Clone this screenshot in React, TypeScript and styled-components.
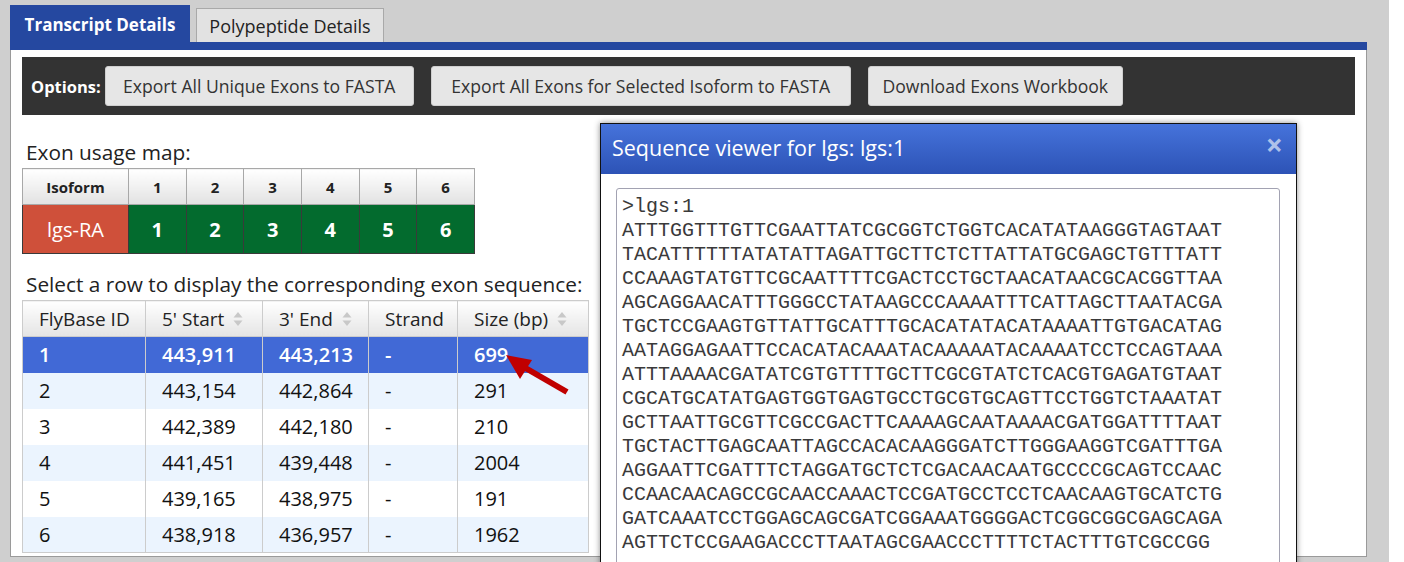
import styled, { createGlobalStyle } from "styled-components";

const GlobalStyle = createGlobalStyle`
  html, body {
    margin: 0;
    padding: 0;
    background: #ffffff;
    font-family: "Open Sans", "Liberation Sans", sans-serif;
  }
  * { box-sizing: border-box; }
`;

const Page = styled.div`
  position: relative;
  width: 1389px;
  height: 562px;
  overflow: hidden;
  background: #cfcfcf;
  padding: 5px 22px 0 10px;
`;

const TabBar = styled.div`
  display: flex;
  align-items: flex-end;
  gap: 6px;
  height: 37px;
`;

const Tab = styled.div<{ $active?: boolean }>`
  display: flex;
  align-items: center;
  justify-content: center;
  height: ${(p) => (p.$active ? "37px" : "34px")};
  width: ${(p) => (p.$active ? "180px" : "188px")};
  background: ${(p) => (p.$active ? "#2548a0" : "#e2e2e2")};
  color: ${(p) => (p.$active ? "#ffffff" : "#222222")};
  border: 1px solid ${(p) => (p.$active ? "#2548a0" : "#a9a9a9")};
  border-bottom: none;
  font-size: ${(p) => (p.$active ? "17px" : "18px")};
  font-weight: ${(p) => (p.$active ? 700 : 400)};
  white-space: nowrap;
`;

const BlueBar = styled.div`
  height: 8px;
  background: #2548a0;
`;

const Panel = styled.div`
  background: #ffffff;
  border: 1px solid #9a9a9a;
  border-top: none;
  padding: 7px 11px 4px 11px;
  height: 507px;
`;

const OptionsBar = styled.div`
  display: flex;
  align-items: center;
  gap: 17px;
  height: 58px;
  padding: 0 9px;
  background: #333333;
`;

const OptionsLabel = styled.span`
  color: #ffffff;
  font-weight: 700;
  font-size: 16.5px;
  margin-right: -13px;
`;

const Button = styled.button<{ $w: number }>`
  width: ${(p) => p.$w}px;
  height: 40px;
  background: #e6e6e6;
  border: 1px solid #cfcfcf;
  border-radius: 3px;
  color: #333333;
  font-family: inherit;
  font-size: 17.6px;
  padding: 0;
  white-space: nowrap;
`;

const LeftColumn = styled.div`
  display: flex;
  flex-direction: column;
  width: 567px;
`;

const Heading = styled.div<{ $top: number }>`
  font-size: 20.8px;
  color: #222222;
  padding-left: 4px;
  margin-top: ${(p) => p.$top}px;
  line-height: 26px;
  height: 28px;
  white-space: nowrap;
`;

const MapTable = styled.table`
  border-collapse: collapse;
  width: 453px;
  margin-top: 1px;
  th, td {
    text-align: center;
    padding: 0;
    border: 1px solid #3a3a3a;
  }
  th {
    height: 36px;
    font-size: 15px;
    font-weight: 700;
    color: #222222;
    border-color: #a8a8a8;
    background: linear-gradient(#ffffff, #e2e2e2);
  }
  td {
    height: 49px;
    font-size: 20px;
    color: #ffffff;
  }
`;

const MapCell = styled.td<{ $isoform?: boolean }>`
  background: ${(p) => (p.$isoform ? "#cf503a" : "#036b2e")};
  font-weight: ${(p) => (p.$isoform ? 500 : 700)};
`;

const DataWrap = styled.div`
  position: relative;
  margin-top: 1px;
`;

const DataTable = styled.table`
  border-collapse: collapse;
  width: 567px;
  border: 1px solid #cccccc;
  th, td {
    text-align: left;
    padding: 0 0 0 16px;
    border-left: 1px solid #cccccc;
    border-right: 1px solid #cccccc;
    white-space: nowrap;
  }
  th {
    height: 36px;
    font-size: 19px;
    font-weight: 400;
    color: #222222;
    background: linear-gradient(#ffffff, #e4e4e4);
    border-bottom: 1px solid #cccccc;
  }
  td {
    height: 36px;
    font-size: 20px;
    color: #111111;
  }
`;

const Row = styled.tr<{ $selected?: boolean; $alt?: boolean }>`
  background: ${(p) => (p.$selected ? "#4169d6" : p.$alt ? "#ebf4fe" : "#ffffff")};
  td {
    color: ${(p) => (p.$selected ? "#ffffff" : "#111111")};
    font-weight: ${(p) => (p.$selected ? 600 : 400)};
  }
`;

const HeadInner = styled.span`
  display: inline-flex;
  align-items: center;
  gap: 9px;
`;

const SortIcon = () => (
  <svg width="10" height="16" viewBox="0 0 10 16">
    <polygon points="5,1 9.5,6.5 0.5,6.5" fill="#c8c8c8" />
    <polygon points="0.5,9.5 9.5,9.5 5,15" fill="#c8c8c8" />
  </svg>
);

const Arrow = styled.svg`
  position: absolute;
  left: 448px;
  top: 40px;
  pointer-events: none;
`;

const Dialog = styled.div`
  position: absolute;
  left: 600px;
  top: 123px;
  width: 697px;
  height: 470px;
  background: #ffffff;
  border: 1px solid #111111;
  box-shadow: 0 0 6px rgba(0, 0, 0, 0.45);
  display: flex;
  flex-direction: column;
`;

const DialogHeader = styled.div`
  display: flex;
  align-items: center;
  justify-content: space-between;
  height: 50px;
  padding: 0 13px 3px 11px;
  background: linear-gradient(#4673db, #2d53b6);
  color: #ffffff;
  font-size: 21.5px;
`;

const Close = styled.span`
  color: #aec1ea;
  font-size: 30px;
  font-weight: 700;
  line-height: 1;
  margin-top: -6px;
`;

const DialogBody = styled.div`
  padding: 14px 16px 0 15px;
  flex: 1;
`;

const SeqBox = styled.div`
  border: 1px solid #a2a2b2;
  border-radius: 3px;
  height: 400px;
  padding: 6px 5px;
  font-family: "Liberation Mono", "Courier New", monospace;
  font-size: 20px;
  line-height: 24px;
  color: #3a3a3a;
  white-space: pre;
`;

const exons = [
  ["1", "443,911", "443,213", "-", "699"],
  ["2", "443,154", "442,864", "-", "291"],
  ["3", "442,389", "442,180", "-", "210"],
  ["4", "441,451", "439,448", "-", "2004"],
  ["5", "439,165", "438,975", "-", "191"],
  ["6", "438,918", "436,957", "-", "1962"],
];

const sequence = [
  ">lgs:1",
  "ATTTGGTTTGTTCGAATTATCGCGGTCTGGTCACATATAAGGGTAGTAAT",
  "TACATTTTTTATATATTAGATTGCTTCTCTTATTATGCGAGCTGTTTATT",
  "CCAAAGTATGTTCGCAATTTTCGACTCCTGCTAACATAACGCACGGTTAA",
  "AGCAGGAACATTTGGGCCTATAAGCCCAAAATTTCATTAGCTTAATACGA",
  "TGCTCCGAAGTGTTATTGCATTTGCACATATACATAAAATTGTGACATAG",
  "AATAGGAGAATTCCACATACAAATACAAAAATACAAAATCCTCCAGTAAA",
  "ATTTAAAACGATATCGTGTTTTGCTTCGCGTATCTCACGTGAGATGTAAT",
  "CGCATGCATATGAGTGGTGAGTGCCTGCGTGCAGTTCCTGGTCTAAATAT",
  "GCTTAATTGCGTTCGCCGACTTCAAAAGCAATAAAACGATGGATTTTAAT",
  "TGCTACTTGAGCAATTAGCCACACAAGGGATCTTGGGAAGGTCGATTTGA",
  "AGGAATTCGATTTCTAGGATGCTCTCGACAACAATGCCCCGCAGTCCAAC",
  "CCAACAACAGCCGCAACCAAACTCCGATGCCTCCTCAACAAGTGCATCTG",
  "GATCAAATCCTGGAGCAGCGATCGGAAATGGGGACTCGGCGGCGAGCAGA",
  "AGTTCTCCGAAGACCCTTAATAGCGAACCCTTTTCTACTTTGTCGCCGG",
].join("\n");

export default function App() {
  return (
    <>
      <GlobalStyle />
      <Page>
        <TabBar>
          <Tab $active>Transcript Details</Tab>
          <Tab>Polypeptide Details</Tab>
        </TabBar>
        <BlueBar />
        <Panel>
          <OptionsBar>
            <OptionsLabel>Options:</OptionsLabel>
            <Button $w={309}>Export All Unique Exons to FASTA</Button>
            <Button $w={420}>Export All Exons for Selected Isoform to FASTA</Button>
            <Button $w={255}>Download Exons Workbook</Button>
          </OptionsBar>

          <LeftColumn>
            <Heading $top={24}>Exon usage map:</Heading>
            <MapTable>
              <thead>
                <tr>
                  <th style={{ width: 106 }}>Isoform</th>
                  {[1, 2, 3, 4, 5, 6].map((n) => (
                    <th key={n}>{n}</th>
                  ))}
                </tr>
              </thead>
              <tbody>
                <tr>
                  <MapCell $isoform>lgs-RA</MapCell>
                  {[1, 2, 3, 4, 5, 6].map((n) => (
                    <MapCell key={n}>{n}</MapCell>
                  ))}
                </tr>
              </tbody>
            </MapTable>

            <Heading $top={17}>Select a row to display the corresponding exon sequence:</Heading>
            <DataWrap>
              <DataTable>
                <thead>
                  <tr>
                    <th style={{ width: 123 }}>FlyBase ID</th>
                    <th style={{ width: 117 }}>
                      <HeadInner>
                        5' Start <SortIcon />
                      </HeadInner>
                    </th>
                    <th style={{ width: 106 }}>
                      <HeadInner>
                        3' End <SortIcon />
                      </HeadInner>
                    </th>
                    <th style={{ width: 89 }}>Strand</th>
                    <th>
                      <HeadInner>
                        Size (bp) <SortIcon />
                      </HeadInner>
                    </th>
                  </tr>
                </thead>
                <tbody>
                  {exons.map((r, i) => (
                    <Row key={r[0]} $selected={i === 0} $alt={i % 2 === 1}>
                      {r.map((c, j) => (
                        <td key={j}>{c}</td>
                      ))}
                    </Row>
                  ))}
                </tbody>
              </DataTable>
              <Arrow width="110" height="60" viewBox="0 0 110 60">
                <line x1="97" y1="52" x2="52" y2="26" stroke="#c00000" strokeWidth="6" />
                <polygon points="36,15 62,20 50,39" fill="#c00000" />
              </Arrow>
            </DataWrap>
          </LeftColumn>
        </Panel>

        <Dialog>
          <DialogHeader>
            <span>Sequence viewer for lgs: lgs:1</span>
            <Close>×</Close>
          </DialogHeader>
          <DialogBody>
            <SeqBox>{sequence}</SeqBox>
          </DialogBody>
        </Dialog>
      </Page>
    </>
  );
}
